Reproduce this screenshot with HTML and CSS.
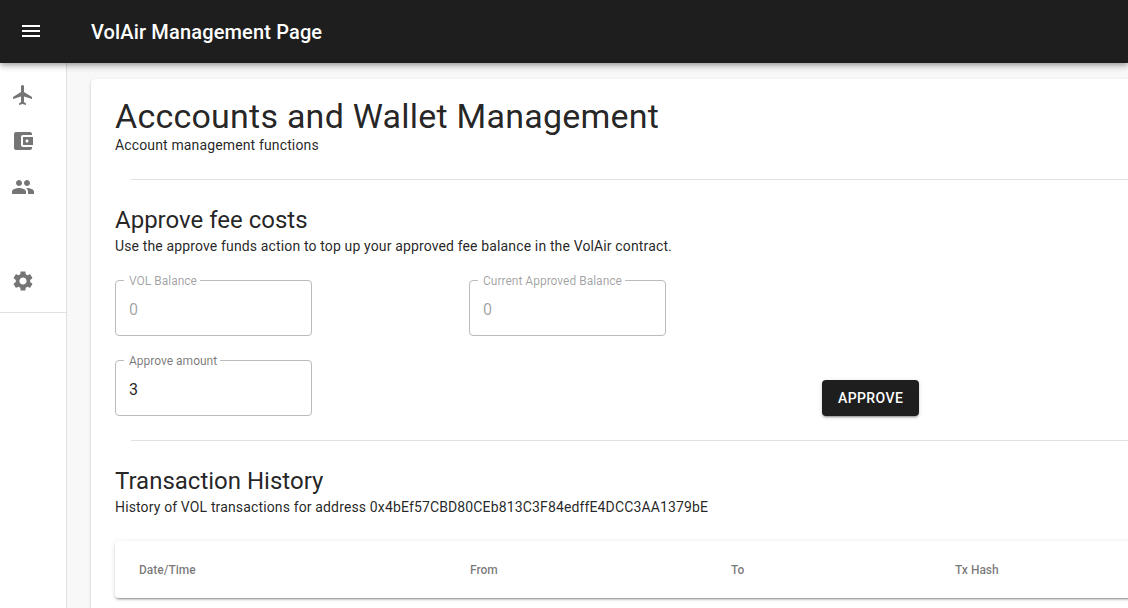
FILE: index.html
```html
<!DOCTYPE html>
<html lang="en">
<head>
    <meta charset="UTF-8">
    <meta name="viewport" content="width=device-width, initial-scale=1.0">
    <title>VolAir Management Page</title>
    <link rel="stylesheet" href="styles.css">
</head>
<body>
    <header class="app-bar">
        <button class="menu-button" aria-label="Open menu">
            <svg class="icon" viewBox="0 0 24 24"><path d="M3 18h18v-2H3v2zm0-5h18v-2H3v2zm0-7v2h18V6H3z"/></svg>
        </button>
        <div class="app-title">VolAir Management Page</div>
    </header>

    <div class="layout">
        <nav class="sidebar">
            <a class="nav-item" href="#" aria-label="Flights">
                <svg class="icon" viewBox="0 0 24 24"><path d="M21 16v-2l-8-5V3.5c0-.83-.67-1.500-1.500-1.500S10 2.670 10 3.500V9l-8 5v2l8-2.500V19l-2 1.500V22l3.500-1 3.500 1v-1.500L13 19v-5.500l8 2.500z"/></svg>
            </a>
            <a class="nav-item" href="#" aria-label="Wallet">
                <svg class="icon" viewBox="0 0 24 24"><path d="M21 18v1c0 1.100-.9 2-2 2H5c-1.110 0-2-.9-2-2V5c0-1.100.89-2 2-2h14c1.100 0 2 .9 2 2v1h-9c-1.110 0-2 .9-2 2v8c0 1.100.89 2 2 2h9zm-9-2h10V8H12v8zm4-2.500c-.83 0-1.500-.67-1.500-1.500s.67-1.500 1.500-1.500 1.500.67 1.500 1.500-.67 1.500-1.500 1.500z"/></svg>
            </a>
            <a class="nav-item" href="#" aria-label="Users">
                <svg class="icon" viewBox="0 0 24 24"><path d="M16 11c1.660 0 2.990-1.340 2.990-3S17.660 5 16 5c-1.660 0-3 1.340-3 3s1.340 3 3 3zm-8 0c1.660 0 2.990-1.340 2.990-3S9.660 5 8 5C6.340 5 5 6.340 5 8s1.340 3 3 3zm0 2c-2.330 0-7 1.170-7 3.500V19h14v-2.500c0-2.330-4.670-3.500-7-3.500zm8 0c-.29 0-.62.020-.97.050 1.160.84 1.970 1.970 1.970 3.450V19h6v-2.500c0-2.330-4.670-3.500-7-3.500z"/></svg>
            </a>
            <a class="nav-item nav-settings" href="#" aria-label="Settings">
                <svg class="icon" viewBox="0 0 24 24"><path d="M19.140 12.940c.04-.3.060-.61.060-.94 0-.32-.02-.64-.07-.94l2.030-1.580c.18-.14.23-.41.120-.61l-1.920-3.320c-.12-.22-.37-.29-.59-.22l-2.390.96c-.5-.38-1.030-.7-1.620-.94L14.400 2.810c-.04-.24-.24-.41-.48-.41h-3.840c-.24 0-.43.17-.47.41L9.250 5.350c-.59.24-1.130.57-1.620.94l-2.390-.96c-.22-.08-.47 0-.59.22L2.740 8.870c-.12.21-.08.47.12.61l2.030 1.580c-.05.3-.09.63-.09.94s.02.64.07.94l-2.030 1.580c-.18.14-.23.41-.12.61l1.920 3.320c.12.22.37.29.59.22l2.390-.96c.5.38 1.030.7 1.620.94l.36 2.540c.05.24.24.41.48.41h3.840c.24 0 .44-.17.47-.41l.36-2.540c.59-.24 1.130-.56 1.620-.94l2.390.96c.22.08.47 0 .59-.22l1.920-3.320c.12-.22.07-.47-.12-.61l-2.010-1.580zM12 15.600c-1.980 0-3.600-1.620-3.600-3.600s1.620-3.600 3.600-3.600 3.600 1.620 3.600 3.600-1.620 3.600-3.600 3.600z"/></svg>
            </a>
        </nav>

        <main class="content">
            <div class="card">
                <h1>Acccounts and Wallet Management</h1>
                <p>Account management functions</p>
                <hr>

                <!-- Approve fee costs -->
                <section>
                    <h2>Approve fee costs</h2>
                    <p>Use the approve funds action to top up your approved fee balance in the VolAir contract.</p>
                    <form class="fee-form">
                        <fieldset class="field disabled">
                            <legend>VOL Balance</legend>
                            <input type="text" value="0" disabled>
                        </fieldset>
                        <fieldset class="field disabled">
                            <legend>Current Approved Balance</legend>
                            <input type="text" value="0" disabled>
                        </fieldset>
                        <fieldset class="field field-amount">
                            <legend>Approve amount</legend>
                            <input type="text" value="3">
                        </fieldset>
                        <button type="button" class="approve-button">APPROVE</button>
                    </form>
                </section>
                <hr>

                <!-- Transaction history -->
                <section>
                    <h2>Transaction History</h2>
                    <p>History of VOL transactions for address 0x4bEf57CBD80CEb813C3F84edffE4DCC3AA1379bE</p>
                    <table class="history">
                        <thead>
                            <tr>
                                <th class="col-date">Date/Time</th>
                                <th class="col-from">From</th>
                                <th class="col-to">To</th>
                                <th>Tx Hash</th>
                            </tr>
                        </thead>
                    </table>
                </section>
            </div>
        </main>
    </div>
</body>
</html>
```

FILE: styles.css
```css
* {
    box-sizing: border-box;
    margin: 0;
    padding: 0;
}
body {
    height: 100vh;
    display: flex;
    flex-direction: column;
    overflow: hidden;
    font-family: Roboto, "Liberation Sans", sans-serif;
    font-size: 14px;
    color: rgba(0, 0, 0, 0.87);
    background-color: #f8f8f8;
}
button {
    border: none;
    font-family: inherit;
    cursor: pointer;
}
.icon {
    display: block;
    width: 24px;
    height: 24px;
    fill: currentColor;
}
.app-bar {
    flex: none;
    z-index: 1;
    display: flex;
    align-items: center;
    height: 63px;
    padding-left: 19px;
    color: #fff;
    background-color: #1e1e1e;
    box-shadow: 0 2px 4px -1px rgba(0,0,0,0.2), 0 4px 5px rgba(0,0,0,0.14), 0 1px 10px rgba(0,0,0,0.12);
}
.menu-button {
    margin: 0 48px 2px 0;
    color: inherit;
    background: none;
}
.app-title {
    font-size: 20px;
    font-weight: 500;
    line-height: 32px;
    letter-spacing: 0.0075em;
}
.layout {
    flex: 1;
    display: flex;
    min-height: 0;
}
.sidebar {
    flex: none;
    width: 67px;
    border-right: 1px solid #e0e0e0;
    background-color: #fff;
    padding-top: 9px;
}
.nav-item {
    display: block;
    padding: 11px;
    color: #757575;
}
.nav-settings {
    margin-top: 48px;
    padding-bottom: 19px;
    border-bottom: 1px solid #e0e0e0;
}
.content {
    flex: 1;
    min-width: 0;
    padding: 16px 0 0 24px;
}
.card {
    width: 1110px;
    height: 700px;
    padding: 17px 24px;
    border-radius: 4px;
    background-color: #fff;
    box-shadow: 0 1px 3px rgba(0,0,0,0.2), 0 1px 1px rgba(0,0,0,0.1);
}
h1 {
    margin-bottom: -1px;
    font-size: 34px;
    font-weight: 400;
    line-height: 40px;
    letter-spacing: 0.0068em;
}
h2 {
    font-size: 24px;
    font-weight: 400;
    line-height: 32px;
}
p {
    line-height: 20px;
    letter-spacing: 0.01em;
}
hr {
    margin: 24px 0 24px 16px;
    border: none;
    border-top: 1px solid #e0e0e0;
}
.fee-form {
    display: grid;
    grid-template-columns: 354px 353px auto;
    row-gap: 17px;
    margin-top: 17px;
    justify-content: start;
}
.field {
    width: 197px;
    height: 63px;
    padding-left: 8px;
    border: 1px solid #bbb;
    border-radius: 4px;
}
.field legend {
    padding: 2px 3px 0 5px;
    font-size: 12px;
    line-height: 13px;
    color: rgba(0, 0, 0, 0.54);
}
.field input {
    display: block;
    width: 170px;
    height: 19px;
    margin: 12px 0 0 5px;
    border: none;
    outline: none;
    background: none;
    font-family: inherit;
    font-size: 16px;
    color: inherit;
}
.disabled legend,
.disabled input {
    color: rgba(0, 0, 0, 0.38);
}
.field-amount {
    grid-column: 1;
}
.approve-button {
    grid-column: 3;
    align-self: end;
    height: 36px;
    padding: 0 16px;
    border-radius: 4px;
    font-size: 14px;
    font-weight: 500;
    letter-spacing: 0.02857em;
    color: #fff;
    background-color: #1e1e1e;
    box-shadow: 0 3px 1px -2px rgba(0,0,0,0.2), 0 2px 2px rgba(0,0,0,0.14), 0 1px 5px rgba(0,0,0,0.12);
}
.history {
    width: 1062px;
    height: 57px;
    margin-top: 24px;
    table-layout: fixed;
    border-spacing: 0;
    border-radius: 4px;
    box-shadow: 0 3px 1px -2px rgba(0,0,0,0.2), 0 2px 2px rgba(0,0,0,0.14), 0 1px 5px rgba(0,0,0,0.12);
}
.history th {
    padding-left: 24px;
    text-align: left;
    font-size: 12px;
    font-weight: 500;
    color: rgba(0, 0, 0, 0.54);
}
.col-date {
    width: 331px;
}
.col-from {
    width: 261px;
}
.col-to {
    width: 224px;
}
```
